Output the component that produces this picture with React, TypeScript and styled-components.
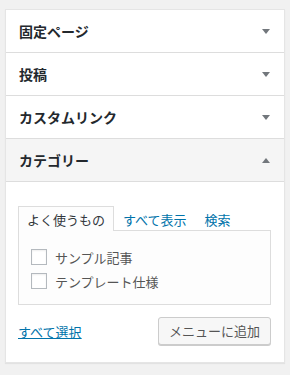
import React from 'react';
import styled, { createGlobalStyle } from 'styled-components';

const GlobalStyle = createGlobalStyle`
  html, body {
    margin: 0;
    padding: 0;
    background: #f1f1f1;
    font-family: "Noto Sans CJK JP", "Noto Sans", sans-serif;
  }
  * { box-sizing: border-box; }
`;

const Page = styled.div`
  padding: 9px 6px 12px 5px;
  width: 290px;
`;

const Panel = styled.div`
  width: 280px;
  background: #fff;
  border: 1px solid #e5e5e5;
  box-shadow: 0 1px 1px rgba(0, 0, 0, 0.06);
`;

const Section = styled.div`
  border-bottom: 1px solid #dddddd;
  &:last-child {
    border-bottom: none;
  }
`;

const Title = styled.div<{ $open?: boolean }>`
  display: flex;
  align-items: center;
  justify-content: space-between;
  height: 42px;
  padding: 0 14px 0 13px;
  font-size: 14px;
  font-weight: bold;
  color: #23282d;
  background: ${(p) => (p.$open ? '#f5f5f5' : '#fff')};
  border-bottom: ${(p) => (p.$open ? '1px solid #dddddd' : 'none')};
  box-sizing: content-box;
`;

const Arrow = styled.span<{ $up?: boolean }>`
  width: 0;
  height: 0;
  border-left: 4px solid transparent;
  border-right: 4px solid transparent;
  ${(p) =>
    p.$up ? 'border-bottom: 5px solid #72777c;' : 'border-top: 5px solid #72777c;'}
`;

const Content = styled.div`
  padding: 24px 13px 17px 12px;
`;

const Tabs = styled.ul`
  display: flex;
  list-style: none;
  margin: 0;
  padding: 0;
`;

const Tab = styled.li<{ $active?: boolean }>`
  height: 25px;
  line-height: 22px;
  padding: 2px 8px 0;
  font-size: 13px;
  border: 1px solid ${(p) => (p.$active ? '#dddddd' : 'transparent')};
  border-bottom: none;
  background: ${(p) => (p.$active ? '#fdfdfd' : 'transparent')};
  color: ${(p) => (p.$active ? '#32373c' : '#0073aa')};
  margin-bottom: -1px;
  position: relative;
  z-index: 1;
`;

const TabPanel = styled.div`
  height: 75px;
  border: 1px solid #dddddd;
  background: #fdfdfd;
  padding: 18px 12px 0;
  display: flex;
  flex-direction: column;
  gap: 8px;
`;

const Item = styled.label`
  display: flex;
  align-items: center;
  gap: 8px;
  font-size: 13px;
  color: #555;
  height: 16px;
`;

const Check = styled.span`
  width: 16px;
  height: 16px;
  border: 1px solid #b4b9be;
  background: #fff;
  box-shadow: inset 0 1px 2px rgba(0, 0, 0, 0.07);
`;

const Footer = styled.div`
  display: flex;
  align-items: center;
  justify-content: space-between;
  margin-top: 12px;
`;

const Link = styled.a`
  font-size: 13px;
  color: #0073aa;
  text-decoration: underline;
`;

const Button = styled.button`
  height: 28px;
  padding: 0 10px 1px;
  font-family: inherit;
  font-size: 13px;
  color: #555;
  background: #f7f7f7;
  border: 1px solid #cccccc;
  border-radius: 3px;
  box-shadow: 0 1px 0 #cccccc;
`;

const sections = ['固定ページ', '投稿', 'カスタムリンク'];

export default function App() {
  return (
    <>
      <GlobalStyle />
      <Page>
        <Panel>
          {sections.map((s) => (
            <Section key={s}>
              <Title>
                {s}
                <Arrow />
              </Title>
            </Section>
          ))}
          <Section>
            <Title $open>
              カテゴリー
              <Arrow $up />
            </Title>
            <Content>
              <Tabs>
                <Tab $active>よく使うもの</Tab>
                <Tab>すべて表示</Tab>
                <Tab>検索</Tab>
              </Tabs>
              <TabPanel>
                <Item>
                  <Check />
                  サンプル記事
                </Item>
                <Item>
                  <Check />
                  テンプレート仕様
                </Item>
              </TabPanel>
              <Footer>
                <Link href="#">すべて選択</Link>
                <Button>メニューに追加</Button>
              </Footer>
            </Content>
          </Section>
        </Panel>
      </Page>
    </>
  );
}
